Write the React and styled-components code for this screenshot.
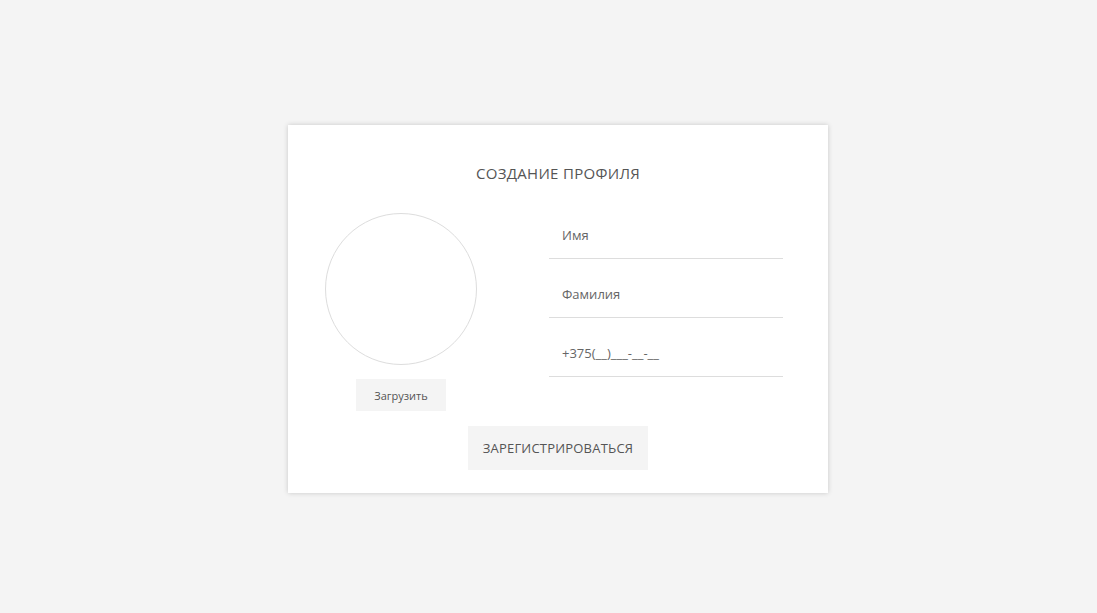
import React from 'react';
import styled, { createGlobalStyle } from 'styled-components';

const GlobalStyle = createGlobalStyle`
  html, body {
    margin: 0;
    padding: 0;
    background: #f4f4f4;
    font-family: 'Open Sans', 'DejaVu Sans', sans-serif;
    color: #555;
  }
`;

const Page = styled.div`
  display: flex;
  align-items: flex-start;
  padding: 125px 0 0 288px;
  min-height: 613px;
  box-sizing: border-box;
`;

const Card = styled.form`
  width: 540px;
  height: 368px;
  box-sizing: border-box;
  background: #fff;
  box-shadow: 0 0 5px rgba(0, 0, 0, 0.18);
  display: flex;
  flex-direction: column;
  align-items: center;
  padding-top: 38px;
`;

const Title = styled.h1`
  margin: 0;
  font-size: 15px;
  font-weight: 400;
  line-height: 20px;
  color: #555;
  letter-spacing: 0.3px;
`;

const Row = styled.div`
  align-self: stretch;
  display: flex;
  padding-left: 37px;
  margin-top: 30px;
  gap: 72px;
`;

const AvatarColumn = styled.div`
  display: flex;
  flex-direction: column;
  align-items: center;
  gap: 14px;
`;

const Avatar = styled.div`
  width: 152px;
  height: 152px;
  border-radius: 50%;
  border: 1px solid #ddd;
  box-sizing: border-box;
`;

const GreyButton = styled.button`
  border: none;
  background: #f4f4f4;
  color: #555;
  font-family: inherit;
  cursor: pointer;
  width: ${(p) => p.$w}px;
  height: ${(p) => p.$h}px;
  font-size: ${(p) => p.$size}px;
  padding: 0;
`;

const Fields = styled.div`
  display: flex;
  flex-direction: column;
  gap: 17px;
  padding-top: 4px;
`;

const Input = styled.input`
  width: 234px;
  height: 42px;
  box-sizing: border-box;
  border: none;
  border-bottom: 1px solid #ddd;
  padding: 0 0 5px 13px;
  font-family: inherit;
  font-size: 13px;
  color: #555;
  outline: none;
  background: transparent;

  &::placeholder {
    color: #666;
  }
`;

const Submit = styled(GreyButton)`
  margin-top: 15px;
  letter-spacing: 0.2px;
`;

export default function App() {
  return (
    <>
      <GlobalStyle />
      <Page>
        <Card onSubmit={(e) => e.preventDefault()}>
          <Title>СОЗДАНИЕ ПРОФИЛЯ</Title>
          <Row>
            <AvatarColumn>
              <Avatar />
              <GreyButton type="button" $w={90} $h={32} $size={11}>
                Загрузить
              </GreyButton>
            </AvatarColumn>
            <Fields>
              <Input placeholder="Имя" />
              <Input placeholder="Фамилия" />
              <Input placeholder="+375(__)___-__-__" />
            </Fields>
          </Row>
          <Submit type="submit" $w={180} $h={44} $size={13}>
            ЗАРЕГИСТРИРОВАТЬСЯ
          </Submit>
        </Card>
      </Page>
    </>
  );
}
